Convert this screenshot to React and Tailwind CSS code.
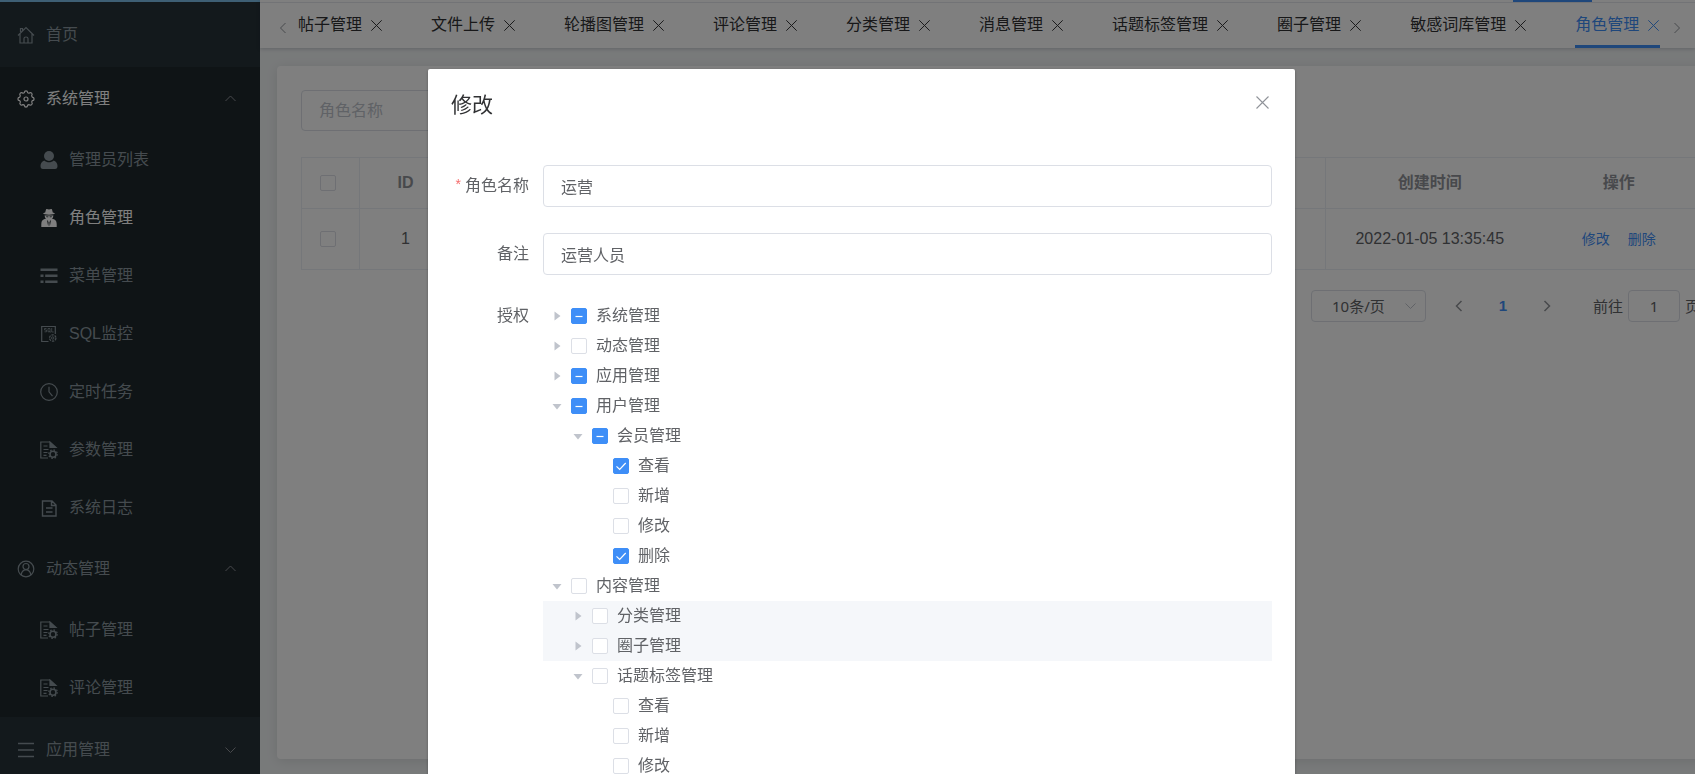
import { useEffect, useRef, useState } from "react";

const tabs = [
  "帖子管理",
  "文件上传",
  "轮播图管理",
  "评论管理",
  "分类管理",
  "消息管理",
  "话题标签管理",
  "圈子管理",
  "敏感词库管理",
  "角色管理",
];

const menu = [
  { name: "首页", icon: HomeIcon },
  {
    name: "系统管理",
    icon: GearIcon,
    open: true,
    active: true,
    children: [
      { name: "管理员列表", icon: UserIcon },
      { name: "角色管理", icon: RoleIcon, active: true },
      { name: "菜单管理", icon: ListIcon },
      { name: "SQL监控", icon: SqlIcon },
      { name: "定时任务", icon: ClockIcon },
      { name: "参数管理", icon: ConfigIcon },
      { name: "系统日志", icon: LogIcon },
    ],
  },
  {
    name: "动态管理",
    icon: AvatarIcon,
    open: true,
    children: [
      { name: "帖子管理", icon: ConfigIcon },
      { name: "评论管理", icon: ConfigIcon },
    ],
  },
  { name: "应用管理", icon: BarsIcon, children: [] },
];

// state: "half" | "on" | "off", caret: "right" | "down" | none for leaves
const tree = [
  { id: 1, name: "系统管理", level: 0, state: "half", caret: "right" },
  { id: 2, name: "动态管理", level: 0, state: "off", caret: "right" },
  { id: 3, name: "应用管理", level: 0, state: "half", caret: "right" },
  { id: 4, name: "用户管理", level: 0, state: "half", caret: "down" },
  { id: 5, name: "会员管理", level: 1, state: "half", caret: "down" },
  { id: 6, name: "查看", level: 2, state: "on" },
  { id: 7, name: "新增", level: 2, state: "off" },
  { id: 8, name: "修改", level: 2, state: "off" },
  { id: 9, name: "删除", level: 2, state: "on" },
  { id: 10, name: "内容管理", level: 0, state: "off", caret: "down" },
  { id: 11, name: "分类管理", level: 1, state: "off", caret: "right", focus: true },
  { id: 12, name: "圈子管理", level: 1, state: "off", caret: "right", focus: true },
  { id: 13, name: "话题标签管理", level: 1, state: "off", caret: "down" },
  { id: 14, name: "查看", level: 2, state: "off" },
  { id: 15, name: "新增", level: 2, state: "off" },
  { id: 16, name: "修改", level: 2, state: "off" },
];

const indents = ["pl-0", "pl-[21px]", "pl-[42px]"];

export default function App() {
  return (
    <div className="flex h-screen overflow-hidden bg-[#f1f4f5] font-['Liberation_Sans','Noto_Sans_CJK_SC',sans-serif] text-base text-[#606266]">
      <Sidebar />
      <main className="flex min-w-0 flex-1 flex-col">
        <TabBar />
        <RoleList />
      </main>
      <RoleDialog />
    </div>
  );
}

function Sidebar() {
  return (
    <aside className="flex w-[260px] shrink-0 flex-col border-t-2 border-[#7dbfe8] bg-[#263238]">
      <nav>
        <ul>
          {menu.map((item) => (
            <li key={item.name} className={item.open ? "bg-[#1e282c]" : ""}>
              <button
                type="button"
                className={`flex w-full items-center gap-[11px] pr-[22px] pl-[17px] ${
                  item.open ? "h-16" : "h-[65px]"
                } ${item.active ? "text-white" : "text-[#8a979e]"}`}
              >
                <item.icon />
                <span>{item.name}</span>
                {item.children && (
                  <Chevron className="ml-auto text-[#909399]" dir={item.open ? "up" : "down"} />
                )}
              </button>
              {item.open && (
                <ul>
                  {item.children.map((child) => (
                    <li key={child.name}>
                      <a
                        href="#"
                        className={`flex h-[58px] items-center gap-[11px] pl-10 ${
                          child.active ? "text-white" : "text-[#8a979e]"
                        }`}
                      >
                        <child.icon />
                        {child.name}
                      </a>
                    </li>
                  ))}
                </ul>
              )}
            </li>
          ))}
        </ul>
      </nav>
    </aside>
  );
}

function TabBar() {
  return (
    <header className="z-10 bg-white shadow-[0_1px_4px_rgba(0,21,41,0.2)]">
      <div className="flex h-[3px] justify-end border-b border-[#e4e7ed] pr-[103px]">
        <span className="h-[2px] w-[79px] bg-[#3e8ef7]" />
      </div>
      <div className="flex h-[45px] items-center pr-[10px] pl-[15px]">
        <button type="button" aria-label="向左" className="pt-1 text-[#909399]">
          <Chevron dir="left" />
        </button>
        <div className="ml-[7px] flex min-w-0 flex-1 gap-12">
          {tabs.map((tab, i) => {
            const active = i === tabs.length - 1;
            return (
              <div
                key={tab}
                className={`flex h-[45px] shrink-0 items-center gap-2 border-b-3 pt-[2px] ${
                  active ? "border-[#3e8ef7] text-[#3e8ef7]" : "border-transparent text-[#303133]"
                }`}
              >
                <a href="#">{tab}</a>
                <button type="button" aria-label={`关闭${tab}`}>
                  <CloseIcon className="size-[13px]" />
                </button>
              </div>
            );
          })}
        </div>
        <button type="button" aria-label="向右" className="pt-1 text-[#909399]">
          <Chevron dir="right" />
        </button>
      </div>
    </header>
  );
}

function RoleList() {
  return (
    <section className="mt-[18px] mr-[-34px] mb-[15px] ml-[17px] flex-1 rounded bg-white p-6 shadow-[0_2px_12px_rgba(0,0,0,0.1)]">
      <input
        aria-label="角色名称"
        placeholder="角色名称"
        className="h-[41px] w-60 rounded border border-[#dcdfe6] px-[17px] placeholder:text-[#c0c4cc]"
      />
      <table className="mt-[26px] w-full table-fixed border-collapse border border-[#ebeef5] text-center">
        <thead className="text-[#909399]">
          <tr className="h-[51px] border-b border-[#ebeef5]">
            <th className="w-[58px] border-r border-[#ebeef5] pl-[18px]">
              <ListCheckbox label="全选" />
            </th>
            <th className="w-[92px] border-r border-[#ebeef5]">ID</th>
            <th className="w-[420px] border-r border-[#ebeef5]">角色名称</th>
            <th className="border-r border-[#ebeef5]">备注</th>
            <th className="w-[208px]">创建时间</th>
            <th className="w-[171px]">操作</th>
          </tr>
        </thead>
        <tbody>
          <tr className="h-[61px]">
            <td className="border-r border-[#ebeef5] pl-[18px]">
              <ListCheckbox label="选择 1" />
            </td>
            <td className="border-r border-[#ebeef5]">1</td>
            <td className="border-r border-[#ebeef5]">运营</td>
            <td className="border-r border-[#ebeef5]">运营人员</td>
            <td>2022-01-05 13:35:45</td>
            <td className="text-sm text-[#3e8ef7]">
              <div className="flex justify-center gap-[18px]">
                <button type="button">修改</button>
                <button type="button">删除</button>
              </div>
            </td>
          </tr>
        </tbody>
      </table>
      <Pagination />
    </section>
  );
}

function ListCheckbox({ label }) {
  return (
    <input
      type="checkbox"
      aria-label={label}
      className="block size-4 appearance-none rounded-xs border border-[#dcdfe6] bg-white"
    />
  );
}

function Pagination() {
  return (
    <div className="mt-5 flex h-8 items-center justify-end pr-[5px] font-['Noto_Sans','Noto_Sans_CJK_SC',sans-serif] text-[15px]">
      <div className="relative">
        <select
          aria-label="每页条数"
          className="h-8 w-[115px] appearance-none rounded border border-[#dcdfe6] bg-white pl-5"
        >
          <option>10条/页</option>
        </select>
        <Chevron dir="down" className="pointer-events-none absolute top-2 right-2 text-[#c0c4cc]" />
      </div>
      <button type="button" aria-label="上一页" className="ml-[25px] text-[#909399]">
        <Chevron dir="left" bold />
      </button>
      <button type="button" className="w-[72px] font-['Liberation_Sans'] font-bold text-[#3e8ef7]">
        1
      </button>
      <button type="button" aria-label="下一页" className="text-[#909399]">
        <Chevron dir="right" bold />
      </button>
      <label className="ml-[38px] flex items-center gap-[5px]">
        前往
        <input
          defaultValue="1"
          className="h-8 w-[52px] rounded border border-[#dcdfe6] text-center"
        />
        页
      </label>
    </div>
  );
}

function RoleDialog() {
  const [form, setForm] = useState({ name: "运营", remark: "运营人员" });

  return (
    <div className="fixed inset-0 z-20 flex items-start justify-center overflow-hidden bg-black/50 pt-[69px] pl-7">
      <div
        role="dialog"
        aria-label="修改"
        className="w-[52%] rounded-xs bg-white px-[23px] pb-10 shadow-[0_1px_3px_rgba(0,0,0,0.3)]"
      >
        <div className="flex h-[72px] items-center justify-between">
          <h2 className="text-[21px] text-[#303133]">修改</h2>
          <button type="button" aria-label="关闭" className="mr-[2px] pb-[6px] text-[#909399]">
            <CloseIcon className="size-[15px]" />
          </button>
        </div>
        <form className="flex flex-col gap-[26px] pt-6">
          <div className="flex h-[42px] items-center">
            <label htmlFor="role-name" className="w-[92px] pr-[14px] text-right">
              <span className="mr-1 align-top text-sm text-[#f56c6c]">*</span>
              角色名称
            </label>
            <input
              id="role-name"
              value={form.name}
              onChange={(event) => setForm((current) => ({ ...current, name: event.target.value }))}
              className="h-full flex-1 rounded border border-[#dcdfe6] px-[17px]"
            />
          </div>
          <div className="flex h-[42px] items-center">
            <label htmlFor="role-remark" className="w-[92px] pr-[14px] text-right">
              备注
            </label>
            <input
              id="role-remark"
              value={form.remark}
              onChange={(event) => setForm((current) => ({ ...current, remark: event.target.value }))}
              className="h-full flex-1 rounded border border-[#dcdfe6] px-[17px]"
            />
          </div>
          <div className="flex">
            <span id="role-auth" className="w-[92px] pr-[14px] text-right leading-[30px]">
              授权
            </span>
            <ul aria-labelledby="role-auth" className="flex-1">
              {tree.map((node) => (
                <TreeRow key={node.id} node={node} />
              ))}
            </ul>
          </div>
        </form>
      </div>
    </div>
  );
}

function TreeRow({ node }) {
  const ref = useRef(null);
  const filled = node.state !== "off";

  useEffect(() => {
    ref.current.indeterminate = node.state === "half";
  }, [node.state]);

  return (
    <li className={`flex h-[30px] items-center ${indents[node.level]} ${node.focus ? "bg-[#f5f7fa]" : ""}`}>
      <span className="flex w-7 justify-center text-[#c0c4cc]">
        {node.caret && (
          <svg viewBox="0 0 10 10" className="size-[10px]" fill="currentColor">
            {node.caret === "right" ? <path d="M2.500 .5 8.500 5l-6 4.500z" /> : <path d="M.5 3h9L5 8.500z" />}
          </svg>
        )}
      </span>
      <label className="flex items-center gap-[9px]">
        <span className="relative size-4">
          <input
            ref={ref}
            type="checkbox"
            defaultChecked={node.state === "on"}
            className={`block size-4 appearance-none rounded-xs border ${
              filled ? "border-[#3e8ef7] bg-[#3e8ef7]" : "border-[#dcdfe6] bg-white"
            }`}
          />
          {filled && (
            <svg
              viewBox="0 0 16 16"
              className="pointer-events-none absolute inset-0 size-4"
              fill="none"
              stroke="#fff"
              strokeWidth="1.2"
            >
              {node.state === "on" ? <path d="m3.500 8.300 3.200 3.200 6-6.500" /> : <path d="M4.500 8.500h7" />}
            </svg>
          )}
        </span>
        {node.name}
      </label>
    </li>
  );
}

const arrows = {
  up: "m3.500 10 5-5 5 5",
  down: "m3.500 5.500 5 5 5-5",
  left: "m10.500 3-5 5 5 5",
  right: "m5.500 3 5 5-5 5",
};

function Chevron({ dir, bold, className = "" }) {
  return (
    <svg
      viewBox="0 0 16 16"
      className={`size-4 ${className}`}
      fill="none"
      stroke="currentColor"
      strokeWidth={bold ? 1.5 : 1}
    >
      <path d={arrows[dir]} />
    </svg>
  );
}

function CloseIcon({ className }) {
  return (
    <svg viewBox="0 0 12 12" className={className} fill="none" stroke="currentColor" strokeWidth=".9">
      <path d="m1.200 1.200 9.600 9.600M10.800 1.200l-9.600 9.600" />
    </svg>
  );
}

function Icon({ children, solid }) {
  return (
    <svg
      viewBox="0 0 18 18"
      className="size-[18px] shrink-0"
      fill={solid ? "currentColor" : "none"}
      stroke={solid ? "none" : "currentColor"}
      strokeWidth="1.2"
    >
      {children}
    </svg>
  );
}

function HomeIcon() {
  return (
    <Icon>
      <path d="M1 9.500 9 1.500l8 8M3 8v9h12V8M7 17v-4.500c0-1 .5-1.500 2-1.500s2 .5 2 1.500V17M3.500 6V2.500h2v2" />
    </Icon>
  );
}

function GearIcon() {
  return (
    <Icon>
      <path
        d="M7.300 2.700C7.500 1 8 .8 9 .8s1.500.2 1.700 1.900l1.200.5c1.400-1 2-.8 2.700-.1s1 1.300 0 2.700l.6 1.300c1.700.2 1.900.8 1.900 1.800s-.2 1.600-1.900 1.800l-.5 1.300c1 1.400.7 2 0 2.700s-1.400.9-2.800-.1l-1.200.5c-.2 1.800-.7 2-1.700 2s-1.500-.2-1.700-2l-1.200-.5c-1.400 1-2 .8-2.700.1s-1-1.300 0-2.700l-.6-1.300C1.100 10.500.9 9.900.9 8.900s.2-1.600 1.900-1.800l.5-1.300c-1-1.400-.7-2 0-2.700s1.400-.9 2.800.1z"
        strokeLinejoin="round"
      />
      <circle cx="9" cy="9" r="2" />
    </Icon>
  );
}

function UserIcon() {
  return (
    <Icon solid>
      <circle cx="9" cy="5" r="5" />
      <path d="M4.200 9.500c2.500 2.400 7.100 2.400 9.600 0 2.500 1 3.700 3 3.700 5.500 0 2-.8 3-2.500 3H3c-1.700 0-2.500-1-2.500-3 0-2.500 1.200-4.500 3.700-5.500z" />
    </Icon>
  );
}

function RoleIcon() {
  return (
    <Icon solid>
      <path d="M6 .5c.8-.7 1.500-.3 3 0 1.500-.3 2.200-.7 3 0l.8 3c1.200.2 2 .5 2 1s-2.700 1.200-5.800 1.200S3.200 5 3.200 4.500s.8-.8 2-1z" />
      <path
        fillRule="evenodd"
        d="M4.700 6.200c2 .5 6.600.5 8.600 0 0 1.700-.5 2.800-1.300 3.500 3 .3 4.700 1.800 4.700 5.300v3H1.300v-3c0-3.500 1.700-5 4.700-5.300-.8-.7-1.300-1.800-1.300-3.500zM6 7.300l.7 1h1.500l.3-.7zm6 0-2.500.3.300.7h1.500zM7 11l1.200 6.500.4-4-.6-1.500zm4 0-1 1-.6 1.500.4 4z"
      />
    </Icon>
  );
}

function ListIcon() {
  return (
    <Icon solid>
      <path d="M.5 1.500h17V4H.5zM.5 7.500h3V10h-3zM5.200 7.500h12.300V10H5.200zM.5 13.500h3V16h-3zM5.200 13.500h12.300V16H5.200z" />
    </Icon>
  );
}

function SqlIcon() {
  return (
    <Icon>
      <path d="M8.500 16.500H1.700v-15h13.600V9" />
      <path
        d="M6.500 3.500h-2V5h2v1.800h-2M8 3.500h2v3.300H8zM9.500 6l1 1.500M11.700 3v4h2"
        strokeWidth=".8"
      />
      <circle cx="12.700" cy="13" r="1.200" strokeWidth=".9" />
      <circle cx="12.700" cy="13" r="3.200" strokeWidth="1.300" strokeDasharray="2.350 1" />
    </Icon>
  );
}

function ClockIcon() {
  return (
    <Icon>
      <circle cx="9" cy="9" r="8.300" />
      <path d="M9 3.800v5l3.500 4.400" />
    </Icon>
  );
}

function ConfigIcon() {
  return (
    <Icon>
      <path d="M8 17H.8V1H10" />
      <path d="M10 1v5.500h6z" fill="currentColor" />
      <path d="M3.500 5h4M3.500 8.500h5M3.500 11.500h4M3.500 14.300h3" />
      <circle cx="13" cy="13.200" r="3" strokeWidth="1.600" />
      <circle cx="13" cy="13.200" r="4.300" strokeWidth="1.200" strokeDasharray="1.500 1.877" />
    </Icon>
  );
}

function LogIcon() {
  return (
    <Icon>
      <path d="M2.500 2h9.500l4 4v11H2.500zM11.500 2v4.500H16M6 9h6.500M6 13h6.500" strokeWidth="1.400" />
    </Icon>
  );
}

function AvatarIcon() {
  return (
    <Icon>
      <circle cx="9" cy="9" r="7.800" />
      <circle cx="9" cy="6.500" r="3" />
      <path d="M4.200 15c.3-3 2-5 4.800-5.300 2.800.3 4.500 2.300 4.800 5.300" />
    </Icon>
  );
}

function BarsIcon() {
  return (
    <Icon>
      <path d="M1 2.500h16M1 9h16M1 15.500h16" strokeWidth="1.300" />
    </Icon>
  );
}
